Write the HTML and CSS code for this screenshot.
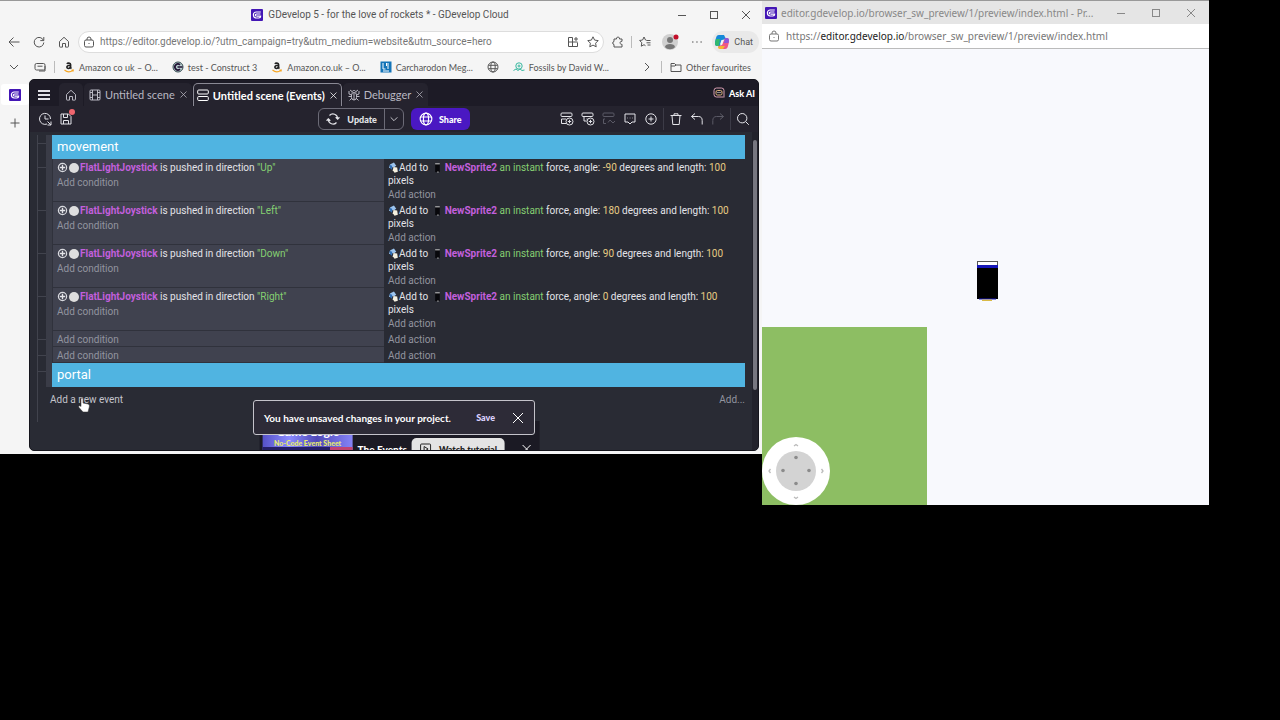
FILE: index.html
```
<!DOCTYPE html>
<html lang="en">
<head>
    <meta charset="utf-8">
    <title>GDevelop 5 - for the love of rockets</title>
    <link rel="stylesheet" href="styles.css">
</head>
<body>
    <svg class="sprites" aria-hidden="true">
        <symbol id="logo" viewBox="0 0 12 12">
            <rect width="12" height="12" rx="1" fill="#4316b5"/>
            <path d="M9.8 3H5.2C3.600 3 2.400 4.200 2.400 5.800S3.500 9 5.200 9h2.500c1.100 0 1.900-.8 1.900-1.900H5.900M9.500 5H5.600c-1.600 0-1.600 2.100 0 2.100" fill="none" stroke="#fff" stroke-width="1.200"/>
        </symbol>
        <symbol id="lock" viewBox="0 0 12 12">
            <rect x="1.500" y="4" width="9" height="7" rx="1.500"/><path d="M4 4V3a2 2 0 0 1 4 0v1M6 7v1"/>
        </symbol>
        <symbol id="home" viewBox="0 0 12 12">
            <path d="M1.500 5.500 6 1.300l4.500 4.200V10.500a.6.6 0 0 1-.6.6H7.500V7.500h-3v3.600H2.100a.6.6 0 0 1-.6-.6z"/>
        </symbol>
        <symbol id="close" viewBox="0 0 12 12"><path d="m2 2 8 8M10 2l-8 8"/></symbol>
        <symbol id="minus" viewBox="0 0 12 12"><path d="M2 6.500h8"/></symbol>
        <symbol id="square" viewBox="0 0 12 12"><rect x="2.500" y="2.500" width="7" height="7"/></symbol>
        <symbol id="down" viewBox="0 0 12 12"><path d="m2 4 4 4 4-4"/></symbol>
        <symbol id="globe" viewBox="0 0 12 12">
            <circle cx="6" cy="6" r="5"/><ellipse cx="6" cy="6" rx="2.200" ry="5"/><path d="M1.500 4.300h9M1.500 7.700h9"/>
        </symbol>
        <symbol id="amazon" viewBox="0 0 12 12">
            <path d="M4 3c.5-1.300 3.600-1.300 3.600.6V6c0 .8.3 1.200.8 1.600M7.500 4.300C5.500 4.300 3.900 4.600 3.900 6.100c0 2 3.100 1.800 3.600-.3" fill="none" stroke="#222" stroke-width="1.600"/>
            <path d="M1.500 9c2.500 2.300 6 2.200 8.500.3M8.500 9h1.800l-.4 1.500" fill="none" stroke="#f5a623" stroke-width="1.100"/>
        </symbol>
        <symbol id="cog" viewBox="0 0 12 12">
            <circle cx="6" cy="6" r="4.500" fill="none" stroke="#d8d9de" stroke-width="1.300"/>
            <path d="M6 3v6M3 6h6" stroke="#e4e4e8" stroke-width="1.500"/>
        </symbol>
        <symbol id="force" viewBox="0 0 12 12">
            <path d="M1 6.500 2.500 2.500 6.500 .5l2.500 3.500-2 1.500z" fill="#9cc4ee"/><path d="m1.500 3 3 1v4.500L2.500 7z" fill="#2f6eb5"/>
            <path d="M6 5.500 10 6l.7 4.500-3.500 1.300-2-2.800z" fill="#f4f0e0"/>
        </symbol>
        <symbol id="sprite" viewBox="0 0 8 12">
            <rect x="2" y="2" width="5" height="9" fill="#08080c"/><path d="M2 2h5" stroke="#ddd"/><path d="M4 11h2" stroke="#aaa"/>
        </symbol>
    </svg>
    <main class="desktop">
        <section class="browser">
            <header class="titlebar">
                <h1 class="window-title"><svg class="logo"><use href="#logo"/></svg>GDevelop 5 - for the love of rockets * - GDevelop Cloud</h1>
                <div class="window-buttons">
                    <button aria-label="Minimise"><svg><use href="#minus"/></svg></button>
                    <button aria-label="Maximise"><svg><use href="#square"/></svg></button>
                    <button aria-label="Close"><svg><use href="#close"/></svg></button>
                </div>
            </header>
            <div class="navbar">
                <button aria-label="Back"><svg viewBox="0 0 12 12"><path d="M11.500 6H1M5.500 1.500 1 6l4.500 4.500"/></svg></button>
                <button aria-label="Reload"><svg viewBox="0 0 12 12"><path d="M10.500 4.500A4.800 4.800 0 1 0 10.800 6.500M10.800 1v3.600H7.300"/></svg></button>
                <button aria-label="Home"><svg><use href="#home"/></svg></button>
                <div class="address">
                    <svg><use href="#lock"/></svg>
                    <input type="text" aria-label="Address" value="https://editor.gdevelop.io/?utm_campaign=try&amp;utm_medium=website&amp;utm_source=hero">
                    <button aria-label="Apps"><svg viewBox="0 0 12 12"><path d="M5.500 1.500h-4v9h9v-4M1.500 6h9M5.500 1.500v9M9 1v4M7 3h4"/></svg></button>
                    <button aria-label="Add to favourites"><svg viewBox="0 0 12 12"><path d="m6 .8 1.600 3.300 3.600.5-2.600 2.600.6 3.600L6 9.100l-3.200 1.700.6-3.600L.8 4.600l3.600-.5z"/></svg></button>
                </div>
                <button aria-label="Extensions"><svg viewBox="0 0 12 12"><path d="M2 3h2.500c-.5-2.600 3.500-2.600 3 0H10v2.300c-2.600-.5-2.600 3.400 0 3V11H2V8.500C.3 8.500.3 5.500 2 5.500z"/></svg></button>
                <span class="divider"></span>
                <button aria-label="Favourites"><svg viewBox="0 0 12 12"><path d="M7.500 4.300 6.500 4 5 1 3.600 4l-3 .5 2.200 2.200-.5 3.500L5 8.700l1.500 1M7.500 4.500h4M7.500 6.800h4M8.500 9h3"/></svg></button>
                <button class="avatar" aria-label="Profile"><svg viewBox="0 0 18 18"><circle cx="8" cy="9" r="8" fill="#d0d0d0" stroke="none"/><g stroke="none"><circle cx="8" cy="7" r="3" fill="#777"/><path d="M3 14c0-4 10-4 10 0-2 3-8 3-10 0z" fill="#777"/><circle cx="14" cy="4" r="2.500" fill="#c3102b"/></g></svg></button>
                <button aria-label="More"><svg viewBox="0 0 12 12"><path d="M1 6h1.500M5.200 6h1.500M9.400 6h1.500"/></svg></button>
                <button class="chat"><svg viewBox="0 0 16 16"><path d="M5 1h5l2 4-4 1-2 6H3c-3 0-2-5-1-8 .5-1.800 1.200-3 3-3z" fill="#1689d8"/><path d="M2 5h4l-1 7H3c-3 0-2-4-1-7z" fill="#31b96e"/><path d="M11 4h2c3 0 2 5 1 8-.5 2-1.200 3-3 3H6l-2-3 4-1z" fill="#ee5785"/><path d="M6 12h5l-2 3H6c-1.500 0-2-1-2-2z" fill="#f5b52f"/><path d="M11 4h2c2.500 0 2 3 1.500 5H10z" fill="#8c58dc"/><path d="M7.500 6h2L8 10.500H6z" fill="#f5f5f5"/></svg>Chat</button>
            </div>
            <nav class="bookmarks">
                <button aria-label="Collapse"><svg><use href="#down"/></svg></button>
                <button aria-label="Import"><svg viewBox="0 0 12 12"><rect x="1" y="2.500" width="10" height="6.500" rx="1.500"/><path d="M3.500 5.200h5M5 10h6V5"/></svg></button>
                <span class="divider"></span>
                <a href="#"><svg><use href="#amazon"/></svg>Amazon co uk – O...</a>
                <a href="#"><svg viewBox="0 0 12 12"><circle cx="6" cy="6" r="5" fill="#b8cfd0" stroke="#34494e"/><path d="M8 3.800a3 3 0 1 0 0 4.400M5.500 6h5" stroke="#213" stroke-width="1.700" fill="none"/></svg>test - Construct 3</a>
                <a href="#"><svg><use href="#amazon"/></svg>Amazon.co.uk – O...</a>
                <a href="#"><svg viewBox="0 0 12 12"><rect x=".5" y=".5" width="11" height="11" fill="#1474b8" stroke="none"/><path d="M3 2v6h2.500M8 2v6M6.500 2v3M3 10h6" stroke="#fff"/></svg>Carcharodon Meg...</a>
                <a href="#" aria-label="Website"><svg><use href="#globe"/></svg></a>
                <a href="#"><svg class="fossil" viewBox="0 0 12 12"><circle cx="6" cy="5" r="3.200"/><circle cx="6" cy="5" r="1"/><path d="M.5 9.500 3 8l2 1.500L7 8l2 1.500L11.500 9"/></svg>Fossils by David W...</a>
                <button class="more" aria-label="More favourites"><svg viewBox="0 0 12 12"><path d="m4 2 4 4-4 4"/></svg></button>
                <span class="divider"></span>
                <a href="#"><svg viewBox="0 0 12 12"><path d="M1 10V2.500h3.500L6 4h5v6.500H1zM1 5h4l1-1"/></svg>Other favourites</a>
            </nav>
            <div class="browser-body">
                <aside class="side-tabs">
                    <a class="side-tab" href="#" aria-label="GDevelop"><svg class="logo"><use href="#logo"/></svg></a>
                    <button aria-label="New tab"><svg viewBox="0 0 12 12"><path d="M6 1.500v9M1.500 6h9"/></svg></button>
                </aside>
                <div class="editor">
                    <div class="tabs">
                        <button class="menu" aria-label="Menu"><svg viewBox="0 0 12 12"><path d="M0 2h12M0 6h12M0 10h12"/></svg></button>
                        <button class="tab home-tab" aria-label="Home"><svg><use href="#home"/></svg></button>
                        <button class="tab"><svg viewBox="0 0 12 12"><rect x="1" y="1" width="10" height="10" rx="1"/><path d="M3.500 1v10M8.500 1v10M1 3.500h2.500M3.500 6h5M1 8.500h2.500M8.500 3.500H11M8.500 8.500H11"/></svg>Untitled scene<svg class="x"><use href="#close"/></svg></button>
                        <button class="tab active"><svg viewBox="0 0 12 12"><rect x=".7" y="1" width="10.600" height="4" rx="1"/><rect x=".7" y="7.500" width="10.600" height="4" rx="1"/></svg>Untitled scene (Events)<svg class="x"><use href="#close"/></svg></button>
                        <button class="tab"><svg viewBox="0 0 12 12"><rect x="3.500" y="3.500" width="5" height="7.500" rx="2.500"/><path d="M4 3.500C4 .8 8 .8 8 3.500M6 4v7M3.500 6 1 5V2M8.500 6 11 5V2M3.500 7.500H.5M8.500 7.500h3M4 9l-2.500 2.500M8 9l2.500 2.500M2 1l2 1.500M10 1 8 2.500"/></svg>Debugger<svg class="x"><use href="#close"/></svg></button>
                        <button class="ask"><svg viewBox="0 0 12 12"><path d="M10.500 10H3.500A2.500 2.500 0 0 1 1 7.500v-4A2.500 2.500 0 0 1 3.500 1h5A2.500 2.500 0 0 1 11 3.500v7" stroke="#d79fb0"/><rect x="3" y="3.500" width="6" height="4.500" rx="1.500" stroke="#e0b57d"/><path d="M5 5v1M7 5v1"/></svg>Ask AI</button>
                    </div>
                    <div class="toolbar">
                        <div class="project">
                            <button aria-label="History"><svg viewBox="0 0 14 14"><path d="M9 12A5.500 5.500 0 1 1 12.500 7M7 3.500V7h3.500M9.500 9.500l3.500 3.500M13 9.500V13H9.500"/></svg></button>
                            <button class="unsaved" aria-label="Save project"><svg viewBox="0 0 14 14"><path d="M2 2h7.500L12 4.500V12H2zM4.500 2v3.500h4V2M4.500 12V8.500h5V12"/></svg></button>
                        </div>
                        <div class="launch">
                            <div class="update">
                                <button><svg viewBox="0 0 12 12"><path d="M2 6.500A4 4 0 0 0 9 9M10 5.500A4 4 0 0 0 3 3M.5 7.500 2 5.800l1.700 1.700M8.300 4.500 10 6.200l1.500-1.700"/></svg>Update</button>
                                <button aria-label="Preview options"><svg class="x"><use href="#down"/></svg></button>
                            </div>
                            <button class="share"><svg><use href="#globe"/></svg>Share</button>
                        </div>
                        <div class="tools">
                            <button aria-label="Add event"><svg viewBox="0 0 14 14"><rect x="1" y="1" width="11" height="3.500" rx="1"/><path d="M6 11.500H1.500V7H6"/><circle cx="9.500" cy="9.500" r="3.500"/><path d="M9.500 7.800v3.400M7.800 9.500h3.400"/></svg></button>
                            <button aria-label="Add sub-event"><svg viewBox="0 0 14 14"><rect x="1" y="1" width="11" height="3.500" rx="1"/><path d="M3 4.500V9h2.500M5.500 7h1"/><circle cx="9.500" cy="9.500" r="3.500"/><path d="M9.500 7.800v3.400M7.800 9.500h3.400"/></svg></button>
                            <button aria-label="Add local variable" disabled><svg viewBox="0 0 14 14"><rect x="1" y="1" width="11" height="3.500" rx="1"/><path d="M3 7H1.500v4.500H4M6 10.500 8 8l3 3 2-2"/></svg></button>
                            <button aria-label="Add comment"><svg viewBox="0 0 14 14"><path d="M2 2h10v8H9l-2 2-2-2H2zM4.500 6H5M6.800 6h.5M9 6h.5"/></svg></button>
                            <button aria-label="Add other event"><svg viewBox="0 0 14 14"><circle cx="7" cy="7" r="5.200"/><path d="M7 4.500v5M4.500 7h5"/></svg></button>
                            <span class="divider"></span>
                            <button aria-label="Delete"><svg viewBox="0 0 14 14"><path d="M1.500 3.500h11M3 3.500l.8 9h6.400l.8-9M5 3.500V1.800h4v1.700"/></svg></button>
                            <button aria-label="Undo"><svg viewBox="0 0 14 14"><path d="M5 1.500 1.500 4.500 5 7.500M1.500 4.500h7c2.500 0 3.700 1.500 3.700 4v4"/></svg></button>
                            <button aria-label="Redo" disabled><svg viewBox="0 0 14 14"><path d="m9 1.500 3.500 3L9 7.500M12.500 4.500h-7C3 4.500 1.800 6 1.800 8.500v4"/></svg></button>
                            <span class="divider"></span>
                            <button aria-label="Search"><svg viewBox="0 0 14 14"><circle cx="6.200" cy="6.200" r="4.700"/><path d="m9.800 9.800 3 3"/></svg></button>
                        </div>
                    </div>
                    <div class="sheet">
                        <div class="tree">
                            <div class="comment">movement</div>
                            <div class="event">
                                <div class="conditions">
                                    <p><svg><use href="#cog"/></svg><i class="dot"></i><b>FlatLightJoystick</b> is pushed in direction <em>"Up"</em></p>
                                    <button>Add condition</button>
                                </div>
                                <div class="actions">
                                    <p><svg><use href="#force"/></svg>Add to <svg class="thumb"><use href="#sprite"/></svg><b>NewSprite2</b> <em>an instant</em> force, angle: <var>-90</var> degrees and length: <var>100</var> pixels</p>
                                    <button>Add action</button>
                                </div>
                            </div>
                            <div class="event">
                                <div class="conditions">
                                    <p><svg><use href="#cog"/></svg><i class="dot"></i><b>FlatLightJoystick</b> is pushed in direction <em>"Left"</em></p>
                                    <button>Add condition</button>
                                </div>
                                <div class="actions">
                                    <p><svg><use href="#force"/></svg>Add to <svg class="thumb"><use href="#sprite"/></svg><b>NewSprite2</b> <em>an instant</em> force, angle: <var>180</var> degrees and length: <var>100</var> pixels</p>
                                    <button>Add action</button>
                                </div>
                            </div>
                            <div class="event">
                                <div class="conditions">
                                    <p><svg><use href="#cog"/></svg><i class="dot"></i><b>FlatLightJoystick</b> is pushed in direction <em>"Down"</em></p>
                                    <button>Add condition</button>
                                </div>
                                <div class="actions">
                                    <p><svg><use href="#force"/></svg>Add to <svg class="thumb"><use href="#sprite"/></svg><b>NewSprite2</b> <em>an instant</em> force, angle: <var>90</var> degrees and length: <var>100</var> pixels</p>
                                    <button>Add action</button>
                                </div>
                            </div>
                            <div class="event">
                                <div class="conditions">
                                    <p><svg><use href="#cog"/></svg><i class="dot"></i><b>FlatLightJoystick</b> is pushed in direction <em>"Right"</em></p>
                                    <button>Add condition</button>
                                </div>
                                <div class="actions">
                                    <p><svg><use href="#force"/></svg>Add to <svg class="thumb"><use href="#sprite"/></svg><b>NewSprite2</b> <em>an instant</em> force, angle: <var>0</var> degrees and length: <var>100</var> pixels</p>
                                    <button>Add action</button>
                                </div>
                            </div>
                            <div class="event">
                                <div class="conditions"><button>Add condition</button></div>
                                <div class="actions"><button>Add action</button></div>
                            </div>
                            <div class="event">
                                <div class="conditions"><button>Add condition</button></div>
                                <div class="actions"><button>Add action</button></div>
                            </div>
                            <div class="comment">portal</div>
                            <div class="add-row">
                                <button>Add a new event<svg class="cursor" viewBox="0 0 12 16"><path d="M3 8V2c0-1.500 2-1.500 2 0v4l5 1c1.500.4 1.500 1.500 1.300 3L10 15H5L1 10.500C0 9 1.500 8 3 9.500z" fill="#fff" stroke="#333" stroke-width=".5"/></svg></button>
                                <button class="add-other">Add...</button>
                            </div>
                        </div>
                        <div class="scrollbar"><span></span></div>
                    </div>
                    <div class="tutorial">
                        <div class="poster"><strong>Game Logic</strong><span>No-Code Event Sheet</span><i></i></div>
                        <span class="tutorial-name">The Events</span>
                        <button class="watch"><svg viewBox="0 0 12 12"><rect x="1" y="1" width="10" height="10" rx="1"/><path d="m4.500 3.500 4 2.500-4 2.500z"/></svg>Watch tutorial</button>
                        <button class="hide" aria-label="Close tutorial"><svg><use href="#close"/></svg></button>
                    </div>
                    <div class="snackbar" role="status">
                        <span>You have unsaved changes in your project.</span>
                        <button class="save">Save</button>
                        <button aria-label="Dismiss"><svg viewBox="0 0 12 12"><path d="m1 1 10 10M11 1 1 11"/></svg></button>
                    </div>
                </div>
            </div>
        </section>
        <section class="preview">
            <header class="preview-title">
                <svg class="logo"><use href="#logo"/></svg>
                <h2>editor.gdevelop.io/browser_sw_preview/1/preview/index.html - Pr...</h2>
                <div class="window-buttons">
                    <button aria-label="Minimise"><svg><use href="#minus"/></svg></button>
                    <button aria-label="Maximise"><svg><use href="#square"/></svg></button>
                    <button aria-label="Close"><svg><use href="#close"/></svg></button>
                </div>
            </header>
            <div class="preview-url"><svg><use href="#lock"/></svg><span>https://<b>editor.gdevelop.io</b>/browser_sw_preview/1/preview/index.html</span></div>
            <div class="game">
                <div class="ground">
                    <svg class="joystick" viewBox="0 0 68 68">
                        <circle cx="34" cy="34" r="34" fill="#fff"/><circle cx="34" cy="34" r="20" fill="#d3d3d3"/>
                        <g fill="#8b8b8b"><circle cx="34" cy="20.500" r="1.800"/><circle cx="34" cy="46.500" r="1.800"/><circle cx="21" cy="33.500" r="1.800"/><circle cx="47" cy="33.500" r="1.800"/></g>
                        <path d="m32 9 2-1.500L36 9M32 60l2 1.500 2-1.500M8.500 32 7 34l1.500 2M59.500 32l1.500 2-1.500 2" fill="none" stroke="#bbb" stroke-width="1.300"/>
                    </svg>
                </div>
                <svg class="player" viewBox="0 0 22 40">
                    <rect x=".5" y=".5" width="20" height="37" fill="#fff" stroke="#555"/>
                    <rect y="4" width="21" height="4" fill="#1616b8"/><rect y="7" width="21" height="31" fill="#000"/>
                    <path d="M2 38h17" stroke="#1616b8"/><path d="M5 39.300h10" stroke="#d9ba45" stroke-width="1.400"/>
                </svg>
            </div>
        </section>
    </main>
</body>
</html>
```
FILE: styles.css
```
* {
    box-sizing: border-box;
}
body {
    margin: 0;
    background-color: #000;
    font-family: Roboto, "Open Sans", sans-serif;
    font-size: 10px;
    color: #555;
}
h1, h2, p {
    margin: 0;
    font-weight: normal;
}
button {
    display: flex;
    align-items: center;
    padding: 0;
    border: none;
    background: none;
    color: inherit;
    font: inherit;
    cursor: pointer;
}
a {
    color: inherit;
    text-decoration: none;
}
svg {
    width: 12px;
    height: 12px;
    flex: none;
    fill: none;
    stroke: currentColor;
}
.sprites {
    display: none;
}
.logo {
    stroke: none;
}
.divider {
    width: 1px;
    height: 12px;
    background-color: #bbb;
}
.desktop {
    display: grid;
    grid-template-columns: minmax(0, 762fr) minmax(0, 447fr) 71fr;
    align-items: start;
}

/* editor window */
.browser {
    overflow: hidden;
    background-color: #f5f5f5;
    border-top: 1px solid #999;
    padding: 0 3px 3px 0;
}
.titlebar {
    display: flex;
    align-items: center;
    height: 27px;
}
.window-title {
    flex: 1;
    display: flex;
    justify-content: center;
    align-items: center;
    gap: 5px;
    padding-left: 84px;
    font-size: 10px;
    white-space: nowrap;
}
.window-buttons {
    display: flex;
    gap: 20px;
    padding-right: 7px;
}
.navbar {
    display: flex;
    align-items: center;
    gap: 13px;
    height: 27px;
    padding-left: 8px;
}
.navbar .divider {
    margin: 0 -6px;
}
.address {
    flex: 1;
    display: flex;
    align-items: center;
    gap: 8px;
    height: 22px;
    margin-left: -5px;
    margin-right: -5px;
    padding: 0 4px;
    border: 1px solid #ddd;
    border-radius: 11px;
    background-color: #fff;
}
.address input {
    flex: 1;
    min-width: 0;
    margin-left: -3px;
    padding: 0;
    border: none;
    outline: none;
    background: none;
    color: #777;
    font: inherit;
}
.avatar svg {
    width: 18px;
    height: 18px;
    margin: 0 -2px;
}
.chat {
    gap: 4px;
    height: 22px;
    padding: 0 6px 0 2px;
    margin-left: -4px;
    border-radius: 11px;
    background-color: #e9e9e9;
    font-size: 9px;
}
.chat svg {
    width: 16px;
    height: 16px;
    stroke: none;
}
.bookmarks {
    display: flex;
    align-items: center;
    gap: 14px;
    height: 24px;
    padding: 0 8px;
    font-family: Lato, sans-serif;
    font-size: 9px;
}
.bookmarks a {
    display: flex;
    align-items: center;
    gap: 4px;
    white-space: nowrap;
}
.bookmarks .divider {
    margin: 0 -6px;
}
.bookmarks .more {
    margin-left: auto;
}
.fossil {
    color: #39b8a0;
}
.browser-body {
    display: flex;
}
.side-tabs {
    width: 29px;
    display: flex;
    flex-direction: column;
    align-items: center;
    gap: 12px;
    padding-top: 5px;
}
.side-tab {
    display: flex;
    align-items: center;
    justify-content: center;
    width: 28px;
    height: 21px;
    border-radius: 3px;
    background-color: #fff;
}
.editor {
    position: relative;
    flex: 1;
    min-width: 0;
    overflow: hidden;
    border: 1px solid #15151c;
    border-radius: 5px;
    background-color: #292b34;
    color: #e3e3e8;
}

/* editor tabs and toolbar */
.tabs {
    display: flex;
    align-items: flex-end;
    gap: 1px;
    height: 26px;
    background-color: #1d1b26;
    font-family: Lato, sans-serif;
}
.menu {
    height: 23px;
    padding: 0 8px;
    stroke-width: 2px;
}
.tab {
    gap: 4px;
    height: 23px;
    padding: 0 4px 0 5px;
    border-radius: 5px 5px 0 0;
    background-color: #25232e;
    color: #b9b8c2;
    font-size: 11px;
    white-space: nowrap;
}
.tab .x {
    width: 9px;
    height: 9px;
}
.home-tab {
    padding: 0 6px;
}
.tab.active {
    padding: 0 3px;
    border: 1px solid #8a8994;
    border-bottom: none;
    color: #fff;
    font-weight: bold;
}
.ask {
    align-self: center;
    gap: 4px;
    margin-left: auto;
    padding-right: 3px;
    color: #fff;
    font-size: 9px;
    font-weight: 900;
}
.toolbar {
    display: grid;
    grid-template-columns: 1fr auto 1fr;
    align-items: center;
    height: 26px;
    padding: 0 8px;
    background-color: #25232e;
    font-family: Lato, sans-serif;
    font-size: 9px;
    font-weight: 900;
}
.project, .launch, .tools {
    display: flex;
    align-items: center;
    gap: 7px;
}
.toolbar button svg {
    width: 14px;
    height: 14px;
}
.unsaved {
    position: relative;
}
.unsaved::after {
    content: "";
    position: absolute;
    top: -3px;
    right: -2px;
    width: 6px;
    height: 6px;
    border-radius: 50%;
    background-color: #f0666f;
}
.update {
    display: flex;
    height: 22px;
    border: 1px solid #6c6b77;
    border-radius: 6px;
}
.update button {
    gap: 7px;
    padding: 0 7px;
}
.update button + button {
    padding: 0 4px;
    border-left: 1px solid #6c6b77;
}
.update button .x {
    width: 10px;
    height: 10px;
}
.share {
    gap: 6px;
    height: 22px;
    padding: 0 8px;
    border-radius: 6px;
    background-color: #4a18c2;
    color: #fff;
}
.tools {
    justify-content: flex-end;
}
.tools .divider {
    height: 22px;
    margin: 0 -2px;
    background-color: #3c3b47;
}
.tools button:disabled {
    color: #5b5a66;
}

/* events sheet */
.sheet {
    position: relative;
    padding: 3px 13px 28px 7px;
}
.tree {
    padding: 0 0 10px 14px;
    border-left: 1px solid #41434d;
}
.comment {
    position: relative;
    height: 24px;
    padding: 0 5px;
    background-color: #50b4e1;
    color: #fff;
    font-size: 13px;
    line-height: 24px;
    box-shadow: -6px 0 #3a3c47;
}
.event {
    position: relative;
    display: grid;
    grid-template-columns: 332fr 361fr;
    box-shadow: -6px 0 #3a3c47;
}
.comment::before, .event::before {
    content: "";
    position: absolute;
    left: -14px;
    top: 8px;
    width: 8px;
    height: 1px;
    background-color: #41434d;
}
.conditions, .actions {
    padding: 1px 0 1px 4px;
    line-height: 13px;
}
.conditions {
    padding-bottom: 0;
    border-bottom: 1px solid #30323c;
    border-left: 1px solid #30323c;
    background-color: #40424f;
}
.event p {
    padding-top: 1px;
}
.conditions p {
    padding-bottom: 1px;
}
.event p svg {
    width: 11px;
    height: 11px;
    stroke: none;
    vertical-align: -2px;
}
.event p .thumb {
    width: 8px;
    margin: 0 4px 0 2px;
}
.event button {
    height: 14px;
    color: #92949f;
}
.event b {
    color: #c25fdc;
}
.event em {
    color: #85cf72;
    font-style: normal;
}
.event var {
    color: #e7cc83;
    font-style: normal;
}
.dot {
    display: inline-block;
    width: 10px;
    height: 10px;
    margin: 0 1px;
    border-radius: 50%;
    background-color: #dedede;
    vertical-align: -2px;
}
.add-row {
    display: flex;
    justify-content: space-between;
    height: 25px;
    margin-left: -2px;
    color: #c3c4cb;
}
.add-row button {
    position: relative;
}
.add-row .add-other {
    color: #92949f;
}
.cursor {
    position: absolute;
    left: 28px;
    top: 10px;
    width: 12px;
    height: 16px;
}
.scrollbar {
    position: absolute;
    top: 0;
    right: 0;
    bottom: 0;
    width: 6px;
    padding: 8px 1px 60px;
    background-color: #22222b;
}
.scrollbar span {
    display: block;
    height: 100%;
    border-radius: 2px;
    background-color: #777780;
}

/* things floating over the sheet */
.tutorial {
    position: absolute;
    left: 50%;
    bottom: -27px;
    width: 280px;
    height: 56px;
    transform: translateX(-48%);
    display: flex;
    align-items: center;
    gap: 5px;
    padding: 0 7px 0 3px;
    background-color: #1b1a24;
    color: #fff;
    font-family: Lato, sans-serif;
    font-size: 10px;
    font-weight: 900;
    white-space: nowrap;
}
.hide {
    margin-left: auto;
}
.poster {
    flex: none;
    align-self: stretch;
    display: flex;
    flex-direction: column;
    align-items: center;
    width: 90px;
    padding-top: 4px;
    background: linear-gradient(90deg, #5551c8, #8a8aff 30%, #5049b8 60%, #8583f8);
    font-size: 12px;
    line-height: 14px;
}
.poster span {
    color: #e6ec6c;
    font-size: 7px;
    line-height: 8px;
}
.poster i {
    align-self: stretch;
    height: 4px;
    background: linear-gradient(90deg, #251f66 75%, #c14474 75%);
}
.watch {
    gap: 7px;
    height: 22px;
    padding: 0 8px;
    border-radius: 5px;
    background-color: #e4e4e4;
    color: #222;
    font-size: 9px;
}
.snackbar {
    position: absolute;
    left: 50%;
    bottom: 15px;
    transform: translateX(-50%);
    display: flex;
    align-items: center;
    width: 282px;
    height: 35px;
    padding: 0 10px;
    border: 1px solid #c4c3ca;
    border-radius: 3px;
    background-color: #2d2b37;
    color: #fff;
    font-family: Lato, sans-serif;
    font-size: 10px;
    font-weight: bold;
    white-space: nowrap;
}
.save {
    margin: 0 17px 0 auto;
    color: #dcd2ff;
    font-size: 9px;
    font-weight: 900;
}

/* game preview window */
.preview {
    border-top: 1px solid #999;
    background-color: #f8f9fd;
    font-family: "Noto Sans", sans-serif;
}
.preview-title {
    display: flex;
    align-items: center;
    gap: 4px;
    height: 23px;
    padding: 0 5px 0 3px;
    background-color: #e5e5e5;
    color: #888;
}
.preview-title h2 {
    flex: 1;
    min-width: 0;
    white-space: nowrap;
    font-size: 10px;
}
.preview-title .window-buttons {
    gap: 23px;
    padding-left: 8px;
}
.preview-url {
    display: flex;
    align-items: center;
    gap: 6px;
    height: 25px;
    padding: 0 6px;
    border-bottom: 1px solid #bbb;
    background-color: #fff;
    color: #777;
}
.preview-url b {
    color: #222;
    font-weight: normal;
}
.game {
    position: relative;
    display: flex;
    align-items: flex-end;
    height: 456px;
}
.ground {
    display: flex;
    align-items: flex-end;
    width: 37%;
    height: 178px;
    background-color: #8dbe63;
}
.joystick {
    width: 68px;
    height: 68px;
    stroke: none;
}
.player {
    position: absolute;
    left: 48%;
    top: 212px;
    width: 22px;
    height: 40px;
    stroke: none;
}
```
